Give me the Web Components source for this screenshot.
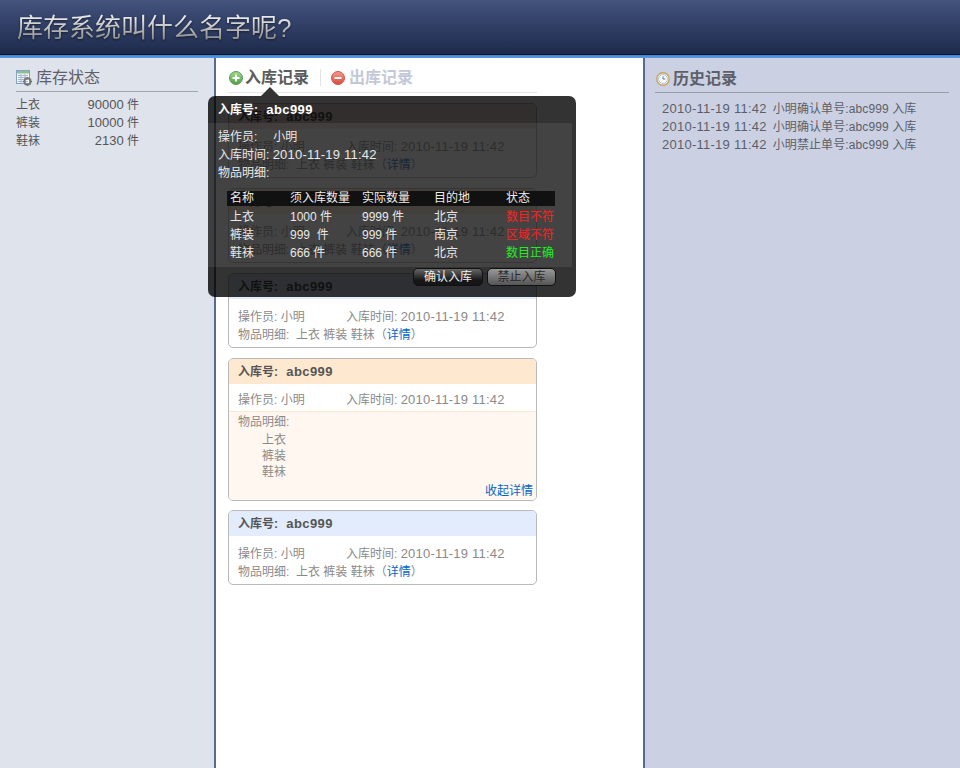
<!DOCTYPE html>
<html lang="zh">
<head>
<meta charset="utf-8">
<title>库存系统</title>
<style>
    html, body { margin: 0; height: 100%; overflow: hidden; }
    body {
        font: 12px/18px "Liberation Sans", "Noto Sans CJK SC", sans-serif;
        color: #666;
    }
</style>
</head>
<body>
<app-shell>
    <app-header slot="top">库存系统叫什么名字呢?</app-header>

    <stock-panel slot="left">
        <stock-row name="上衣" count="90000"></stock-row>
        <stock-row name="裤装" count="10000"></stock-row>
        <stock-row name="鞋袜" count="2130"></stock-row>
    </stock-panel>

    <record-panel slot="center">
        <record-card tone="red" order="abc999" time="2010-11-19 11:42">上衣 裤装 鞋袜</record-card>
        <record-card tone="orange" order="abc999" time="2010-11-19 11:42">上衣 裤装 鞋袜</record-card>
        <record-card tone="blue" order="abc999" time="2010-11-19 11:42">上衣 裤装 鞋袜</record-card>
        <record-card tone="orange" order="abc999" time="2010-11-19 11:42" open>
            <div>上衣</div>
            <div>裤装</div>
            <div>鞋袜</div>
        </record-card>
        <record-card tone="blue" order="abc999" time="2010-11-19 11:42">上衣 裤装 鞋袜</record-card>
        <order-popup slot="popup"></order-popup>
    </record-panel>

    <history-panel slot="right">
        <history-row time="2010-11-19 11:42">小明确认单号:abc999 入库</history-row>
        <history-row time="2010-11-19 11:42">小明确认单号:abc999 入库</history-row>
        <history-row time="2010-11-19 11:42">小明禁止单号:abc999 入库</history-row>
    </history-panel>
</app-shell>

<script>
const TABLE_ICON = `<svg width="16" height="16" viewBox="0 0 16 16">
    <rect x="0.5" y="0.5" width="13" height="13" fill="#f4f7fc" stroke="#7fa2d6"/>
    <rect x="1" y="1" width="12" height="2.5" fill="#8fc08a"/>
    <path d="M2 5.5h10M2 7.5h10M2 9.5h10M2 11.5h10M5 4v9M9 4v9" stroke="#a9b6c9" stroke-width="1"/>
    <circle cx="11.5" cy="11.5" r="3.2" fill="none" stroke="#777" stroke-width="2"/>
    <path d="M11.5 7v1.4M11.5 14.6V16M7 11.5h1.4M14.6 11.5H16M8.6 8.6l1 1M13.4 13.4l1 1M14.4 8.6l-1 1M9.6 13.4l-1 1" stroke="#777" stroke-width="1.2"/>
</svg>`;

const PLUS_ICON = `<svg width="14" height="14" viewBox="0 0 14 14">
    <defs><linearGradient id="g" x1="0" y1="0" x2="0" y2="1"><stop offset="0" stop-color="#a6d88e"/><stop offset="1" stop-color="#4f9e45"/></linearGradient></defs>
    <circle cx="7" cy="7" r="6.5" fill="url(#g)" stroke="#5d9c58"/>
    <path d="M7 3.5v7M3.5 7h7" stroke="#fff" stroke-width="2"/>
</svg>`;

const MINUS_ICON = `<svg width="14" height="14" viewBox="0 0 14 14">
    <defs><linearGradient id="r" x1="0" y1="0" x2="0" y2="1"><stop offset="0" stop-color="#f49a8c"/><stop offset="1" stop-color="#d9493c"/></linearGradient></defs>
    <circle cx="7" cy="7" r="6.5" fill="url(#r)" stroke="#c9594f"/>
    <path d="M3.5 7h7" stroke="#fff" stroke-width="2"/>
</svg>`;

const CLOCK_ICON = `<svg width="14" height="14" viewBox="0 0 14 14">
    <circle cx="7" cy="7" r="6.2" fill="#eef3fb" stroke="#c9a45c" stroke-width="1.4"/>
    <circle cx="7" cy="7" r="4.4" fill="#fff" stroke="#9db4d8" stroke-width="0.8"/>
    <path d="M7 4.2V7h2.4" fill="none" stroke="#5b78a8" stroke-width="1"/>
</svg>`;

class AppShell extends HTMLElement {
    constructor() {
        super();
        this.attachShadow({ mode: 'open' }).innerHTML = `
            <style>
                :host {
                    display: grid;
                    grid-template-columns: 216px 1fr 317px;
                    grid-template-rows: 58px 1fr;
                    height: 100vh;
                }
                .top { grid-column: 1 / 4; display: block; }
            </style>
            <div class="top"><slot name="top"></slot></div>
            <slot name="left"></slot>
            <slot name="center"></slot>
            <slot name="right"></slot>`;
    }
}

class AppHeader extends HTMLElement {
    constructor() {
        super();
        this.attachShadow({ mode: 'open' }).innerHTML = `
            <style>
                :host {
                    display: block;
                    box-sizing: border-box;
                    height: 58px;
                    padding: 12px 0 0 17px;
                    background: linear-gradient(#46557f 0, #3a4972 12px, #1f2c4e 52px, #1c2947 54px);
                    position: relative;
                }
                :host::after {
                    content: "";
                    position: absolute;
                    left: 0;
                    right: 0;
                    top: 54px;
                    height: 4px;
                    background: linear-gradient(#0b1020 0, #0b1020 1px, #3f86d8 1px, #5a9be2 100%);
                }
                h1 {
                    margin: 0;
                    font-weight: normal;
                    font-size: 26px;
                    line-height: 32px;
                    color: transparent;
                    background: linear-gradient(#e8e8e8 20%, #8c8c8c 85%);
                    -webkit-background-clip: text;
                    background-clip: text;
                    display: inline-block;
                    filter: drop-shadow(0 1px 1px rgba(0, 0, 0, .5));
                }
            </style>
            <h1><slot></slot></h1>`;
    }
}

class StockPanel extends HTMLElement {
    constructor() {
        super();
        this.attachShadow({ mode: 'open' }).innerHTML = `
            <style>
                :host {
                    display: block;
                    box-sizing: border-box;
                    background: #dfe3ec;
                    border-right: 2px solid #5b6a8c;
                    padding: 7px 16px 0;
                }
                h2 {
                    display: flex;
                    align-items: center;
                    gap: 4px;
                    margin: 0 0 4px;
                    height: 26px;
                    border-bottom: 1px solid #a2a6b2;
                    font-weight: normal;
                    font-size: 16px;
                    color: #5d6069;
                    padding-bottom: 0;
                }
            </style>
            <h2>${TABLE_ICON}库存状态</h2>
            <slot></slot>`;
    }
}

class StockRow extends HTMLElement {
    constructor() {
        super();
        this.attachShadow({ mode: 'open' }).innerHTML = `
            <style>
                :host { display: flex; width: 123px; justify-content: space-between; color: #555; }
                .n { font-size: 13px; }
            </style>
            <span>${this.getAttribute('name')}</span>
            <span><span class="n">${this.getAttribute('count')}</span> 件</span>`;
    }
}

class RecordPanel extends HTMLElement {
    constructor() {
        super();
        this.attachShadow({ mode: 'open' }).innerHTML = `
            <style>
                :host {
                    display: block;
                    position: relative;
                    background: #fff;
                    padding: 5px 106px 0 12px;
                    min-width: 0;
                }
                .tabs {
                    display: flex;
                    align-items: center;
                    height: 29px;
                    border-bottom: 1px solid #e6e6e6;
                    margin-bottom: 10px;
                    font-size: 16px;
                    font-weight: bold;
                }
                .tab { display: flex; align-items: center; gap: 2px; padding-left: 1px; }
                .on { color: #5c5c5c; padding-right: 11px; border-right: 1px solid #e3e3e3; height: 17px; }
                .off { color: #c3c8d8; padding-left: 10px; gap: 4px; }
                .list { display: flex; flex-direction: column; gap: 10px; }
                .arrow {
                    position: absolute;
                    left: 45px;
                    top: 29px;
                    width: 0;
                    height: 0;
                    border: 9px solid transparent;
                    border-top: 0;
                    border-bottom-color: #333;
                }
            </style>
            <div class="tabs">
                <span class="tab on">${PLUS_ICON}入库记录</span>
                <span class="tab off">${MINUS_ICON}出库记录</span>
            </div>
            <div class="list"><slot></slot></div>
            <div class="arrow"></div>
            <slot name="popup"></slot>`;
    }
}

class RecordCard extends HTMLElement {
    constructor() {
        super();
        const tones = { red: '#fbe6e2', orange: '#fee8d0', blue: '#e3ecfc' };
        const head = tones[this.getAttribute('tone')];
        const open = this.hasAttribute('open');
        const time = this.getAttribute('time');
        const goods = open
            ? `<div class="more">
                   <div>物品明细:</div>
                   <div class="items"><slot></slot></div>
                   <div class="close">收起详情</div>
               </div>`
            : `<div class="line">物品明细:&nbsp; <slot></slot>（<a>详情</a>）</div>`;
        this.attachShadow({ mode: 'open' }).innerHTML = `
            <style>
                :host {
                    display: block;
                    box-sizing: border-box;
                    border: 1px solid #b9b9b9;
                    border-radius: 5px;
                    overflow: hidden;
                    background: #fff;
                    color: #8a8a8a;
                }
                :host([open]) { margin-bottom: -1px; }
                .head {
                    height: 25px;
                    padding-left: 9px;
                    background: ${head};
                    color: #555;
                    font-weight: bold;
                    line-height: 25px;
                }
                .head b { font-size: 13px; letter-spacing: .4px; margin-left: 5px; }
                .body { padding: ${open ? '7px' : '9px'} 9px 0; }
                .info { display: flex; line-height: 18px; }
                .op { width: 108px; }
                .n { font-size: 13px; letter-spacing: .2px; }
                .line { padding-bottom: 3px; line-height: 18px; }
                a { color: #0066cc; }
                .more {
                    position: relative;
                    background: #fff7f0;
                    border-top: 1px solid #fee8d0;
                    margin-top: 2px;
                    padding: 1px 9px 0;
                    height: 87px;
                }
                .items { padding: 1px 0 0 24px; line-height: 16px; }
                .items ::slotted(div) { height: 16px; }
                .close { position: absolute; right: 3px; bottom: 0; color: #0066cc; }
            </style>
            <div class="head">入库号: <b>${this.getAttribute('order')}</b></div>
            <div class="body">
                <div class="info">
                    <span class="op">操作员: 小明</span>
                    <span>入库时间: <span class="n">${time}</span></span>
                </div>
                ${open ? '' : goods}
            </div>
            ${open ? goods : ''}`;
    }
}

class OrderPopup extends HTMLElement {
    constructor() {
        super();
        const rows = [
            ['上衣', '1000 件', '9999 件', '北京', '数目不符', 'bad'],
            ['裤装', '999&nbsp; 件', '999 件', '南京', '区域不符', 'bad'],
            ['鞋袜', '666 件', '666 件', '北京', '数目正确', 'good'],
        ];
        const body = rows.map(r => `<tr>
            <td>${r[0]}</td><td>${r[1]}</td><td>${r[2]}</td><td>${r[3]}</td><td class="${r[5]}">${r[4]}</td>
        </tr>`).join('');
        this.attachShadow({ mode: 'open' }).innerHTML = `
            <style>
                :host {
                    display: block;
                    position: absolute;
                    left: -8px;
                    top: 38px;
                    width: 368px;
                    height: 201px;
                    box-sizing: border-box;
                    border-radius: 7px;
                    background: rgba(0, 0, 0, .8);
                    color: #e8e8e8;
                    overflow: hidden;
                }
                .gloss {
                    position: absolute;
                    left: 0;
                    right: 4px;
                    top: 27px;
                    height: 144px;
                    background: rgba(255, 255, 255, .08);
                }
                .content { position: relative; padding: 5px 10px 0; }
                .title { color: #fff; font-weight: bold; height: 27px; line-height: 18px; }
                .title b { font-size: 13px; letter-spacing: .4px; margin-left: 5px; }
                .meta { height: 54px; }
                .who { margin-left: 6px; }
                .n { font-size: 13px; letter-spacing: .2px; }
                table {
                    margin: 9px 0 0 9px;
                    width: 328px;
                    border-collapse: collapse;
                    table-layout: fixed;
                }
                th, td { padding: 0 0 0 3px; font-weight: normal; text-align: left; height: 18px; white-space: nowrap; }
                th { height: 15px; line-height: 15px; background: #111; color: #eee; }
                tbody tr:first-child td { height: 20px; vertical-align: bottom; }
                .bad { color: #ff2020; }
                .good { color: #20f020; }
                .actions {
                    position: absolute;
                    top: 172px;
                    right: 20px;
                    display: flex;
                    gap: 4px;
                }
                .btn {
                    box-sizing: border-box;
                    height: 18px;
                    line-height: 16px;
                    width: 70px;
                    text-align: center;
                    border: 1px solid #111;
                    border-radius: 5px;
                    background: linear-gradient(#666, #161616 70%);
                    color: #eee;
                }
                .btn.off {
                    width: 69px;
                    background: linear-gradient(#999, #555);
                    color: #2a2a2a;
                }
            </style>
            <div class="gloss"></div>
            <div class="content">
                <div class="title">入库号: <b>abc999</b></div>
                <div class="meta">
                    <div>操作员:&nbsp;&nbsp; <span class="who">小明</span></div>
                    <div>入库时间: <span class="n">2010-11-19 11:42</span></div>
                    <div>物品明细:</div>
                </div>
                <table>
                    <colgroup><col width="60"><col width="72"><col width="72"><col width="72"><col width="52"></colgroup>
                    <thead><tr><th>名称</th><th>须入库数量</th><th>实际数量</th><th>目的地</th><th>状态</th></tr></thead>
                    <tbody>${body}</tbody>
                </table>
            </div>
            <div class="actions">
                <div class="btn">确认入库</div>
                <div class="btn off">禁止入库</div>
            </div>`;
    }
}

class HistoryPanel extends HTMLElement {
    constructor() {
        super();
        this.attachShadow({ mode: 'open' }).innerHTML = `
            <style>
                :host {
                    display: block;
                    box-sizing: border-box;
                    background: #cbd1e3;
                    border-left: 2px solid #5b6a8c;
                    padding: 7px 11px 0 10px;
                }
                h2 {
                    display: flex;
                    align-items: center;
                    gap: 3px;
                    margin: 0 0 7px;
                    height: 26px;
                    padding: 1px 0 0 1px;
                    border-bottom: 1px solid #9a9da8;
                    font-size: 16px;
                    color: #5d6069;
                }
            </style>
            <h2>${CLOCK_ICON}历史记录</h2>
            <slot></slot>`;
    }
}

class HistoryRow extends HTMLElement {
    constructor() {
        super();
        this.attachShadow({ mode: 'open' }).innerHTML = `
            <style>
                :host { display: block; padding-left: 7px; color: #5c5f68; white-space: nowrap; letter-spacing: .1px; }
                .n { font-size: 13px; letter-spacing: .25px; margin-right: 6px; }
            </style>
            <span class="n">${this.getAttribute('time')}</span><slot></slot>`;
    }
}

customElements.define('app-shell', AppShell);
customElements.define('app-header', AppHeader);
customElements.define('stock-panel', StockPanel);
customElements.define('stock-row', StockRow);
customElements.define('record-panel', RecordPanel);
customElements.define('record-card', RecordCard);
customElements.define('order-popup', OrderPopup);
customElements.define('history-panel', HistoryPanel);
customElements.define('history-row', HistoryRow);
</script>
</body>
</html>
